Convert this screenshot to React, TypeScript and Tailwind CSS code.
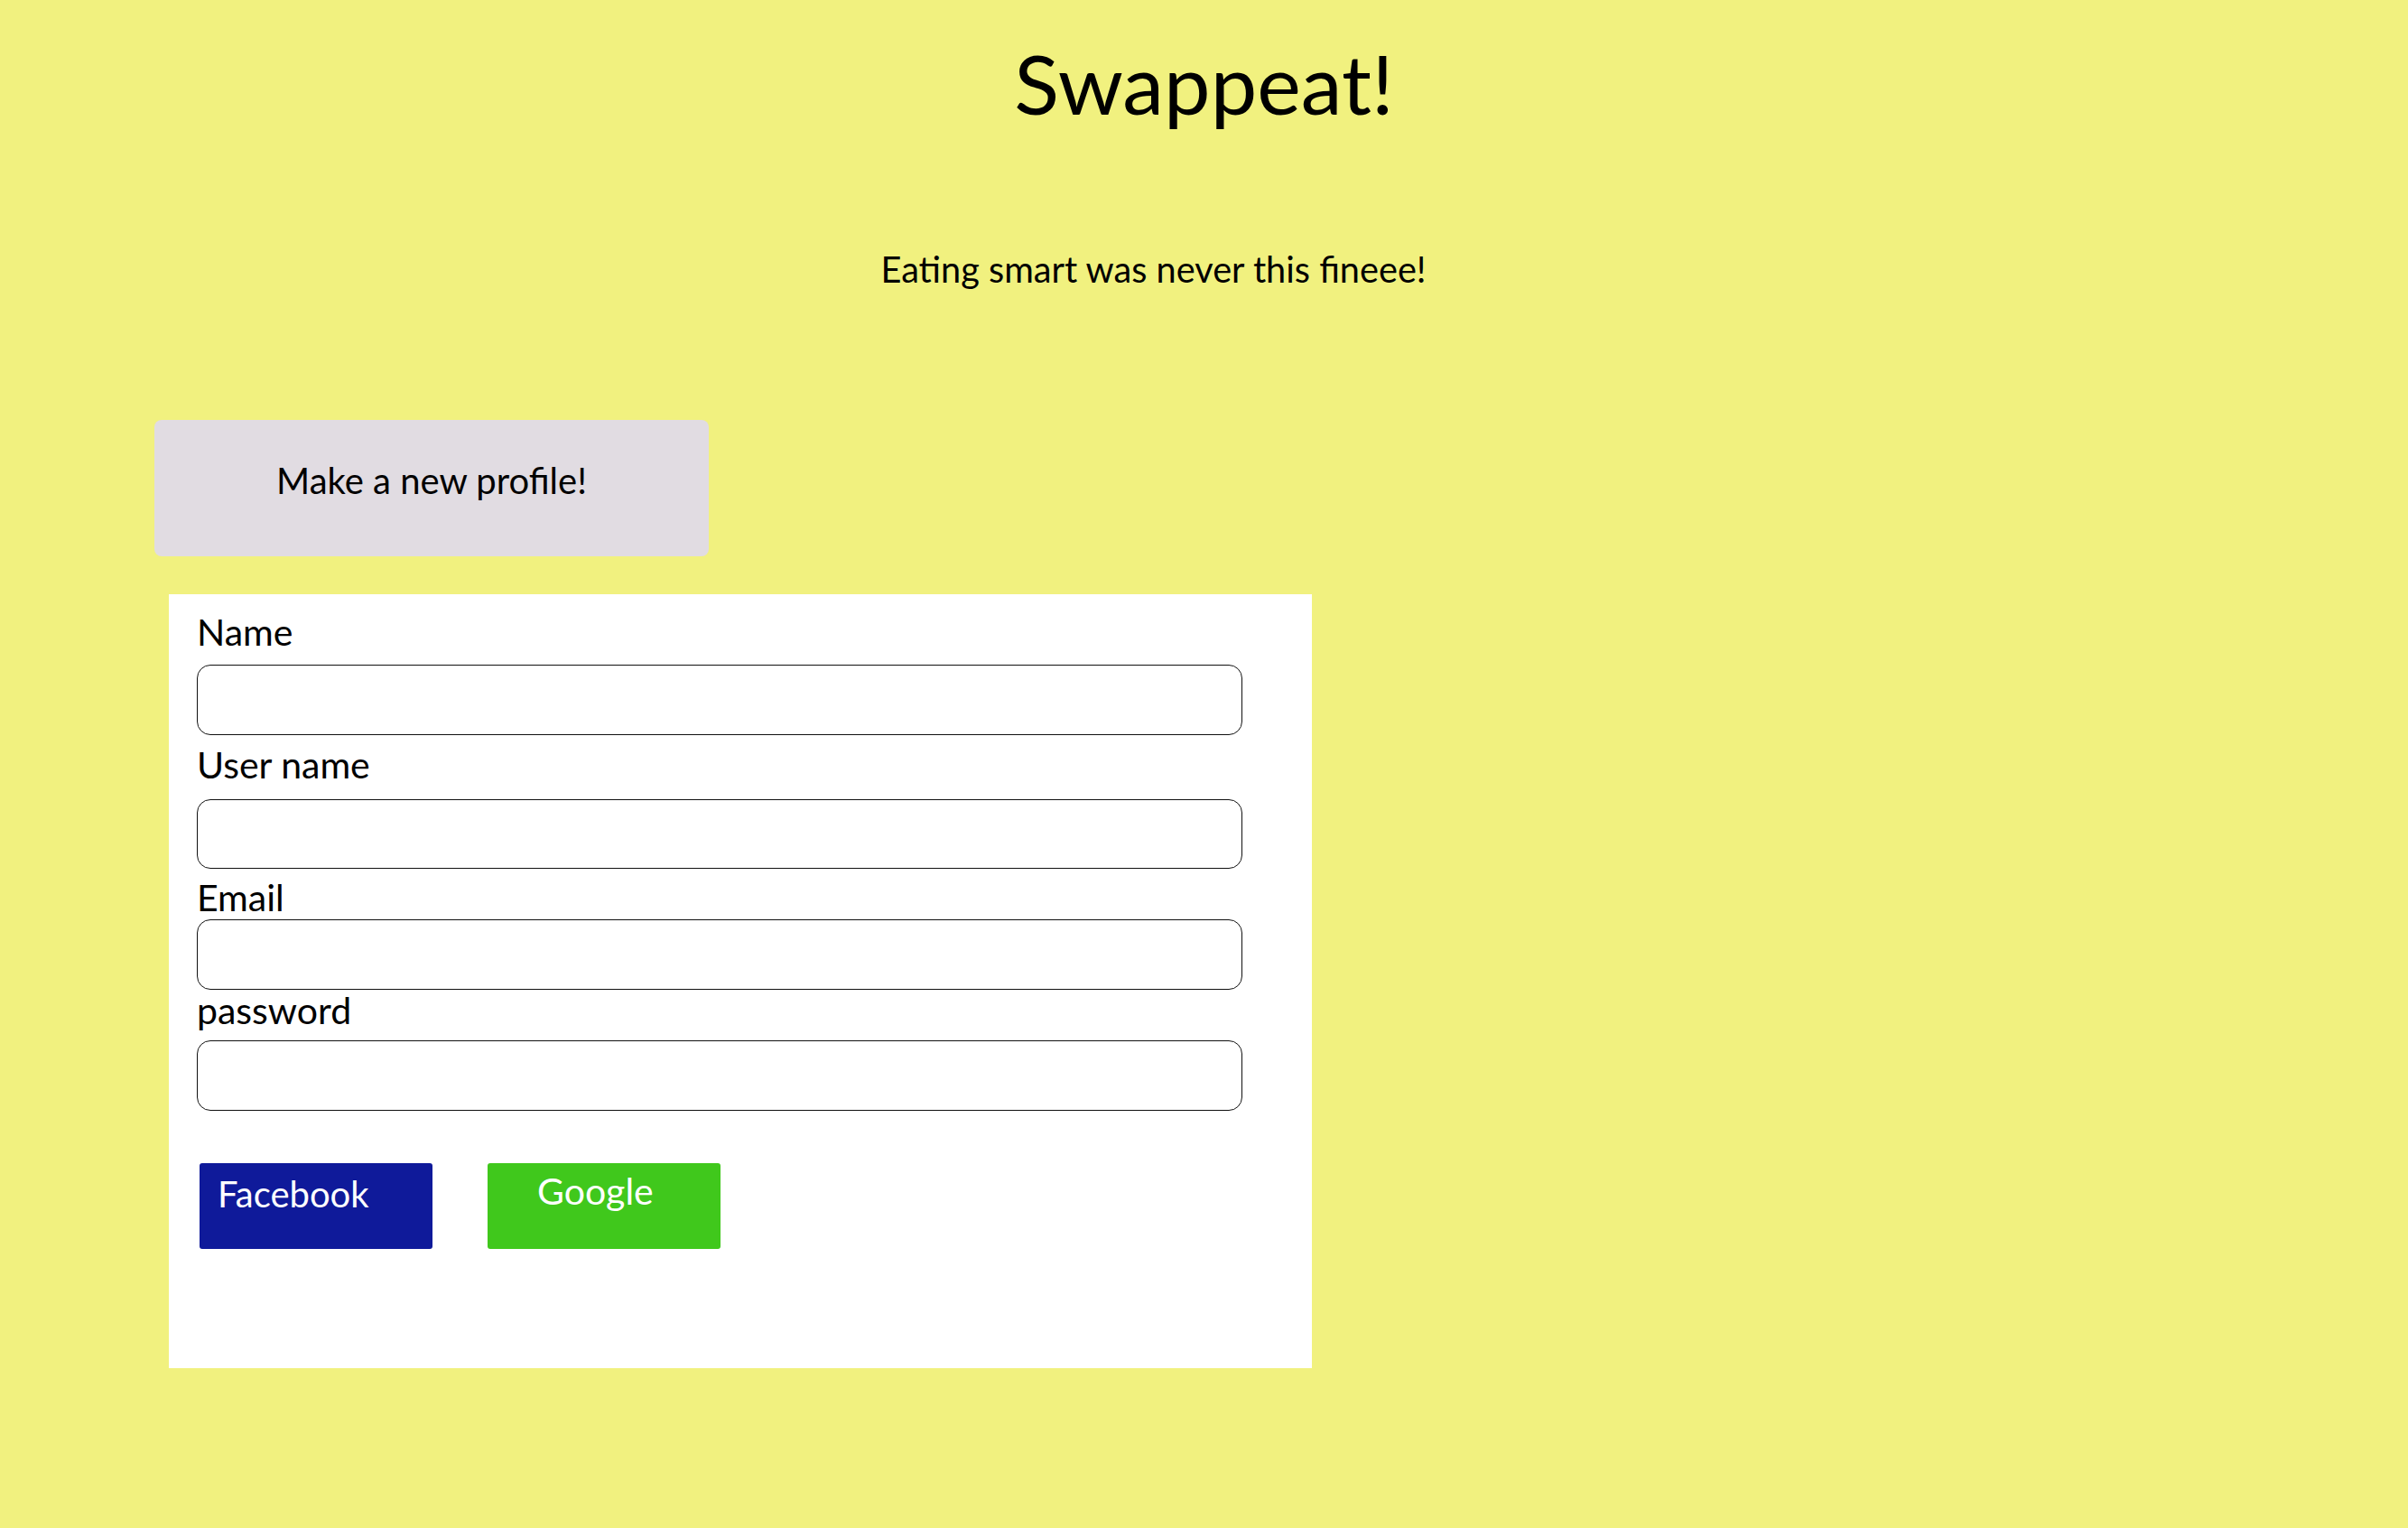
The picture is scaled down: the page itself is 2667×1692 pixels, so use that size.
import React from "react";

const fields = [
  { label: "Name", labelClass: "mt-[21px]", inputClass: "mt-[16px] h-[78px]" },
  { label: "User name", labelClass: "mt-[12px]", inputClass: "mt-[18px] h-[77px]" },
  { label: "Email", labelClass: "mt-[11px]", inputClass: "mt-[4px] h-[78px]" },
  { label: "password", labelClass: "mt-[2px]", inputClass: "mt-[13px] h-[78px]" },
];

export default function App() {
  return (
    <div className="min-h-screen w-full bg-[#f1f17f] font-['Lato',sans-serif] text-black overflow-hidden">
      <h1 className="pt-[46px] text-center text-[92px] leading-none font-normal">Swappeat!</h1>

      <p className="mt-[140px] pr-[112px] text-center text-[39.7px] leading-none">
        Eating smart was never this fineee!
      </p>

      <div className="mt-[147px] ml-[171px] w-[614px] h-[151px] rounded-lg bg-[#e1dce2] pt-[47px] text-center text-[40px] leading-none">
        Make a new profile!
      </div>

      <div className="mt-[42px] ml-[187px] w-[1266px] h-[857px] bg-white pl-[31px] flex flex-col">
        {fields.map((f) => (
          <React.Fragment key={f.label}>
            <label className={`${f.labelClass} text-[41px] leading-none`}>{f.label}</label>
            <input
              type="text"
              className={`${f.inputClass} w-[1158px] rounded-[15px] border border-[#111] bg-white outline-none`}
            />
          </React.Fragment>
        ))}

        <div className="mt-[58px] ml-[3px] flex gap-[61px]">
          <button className="w-[258px] h-[95px] rounded-[3px] bg-[#0f1a9a] text-white text-[40px] leading-none pt-[14px] pl-[20px] text-left flex items-start">
            Facebook
          </button>
          <button className="w-[258px] h-[95px] rounded-[3px] bg-[#40c81c] text-white text-[41px] leading-none pt-[10px] pl-[55px] text-left flex items-start">
            Google
          </button>
        </div>
      </div>
    </div>
  );
}
